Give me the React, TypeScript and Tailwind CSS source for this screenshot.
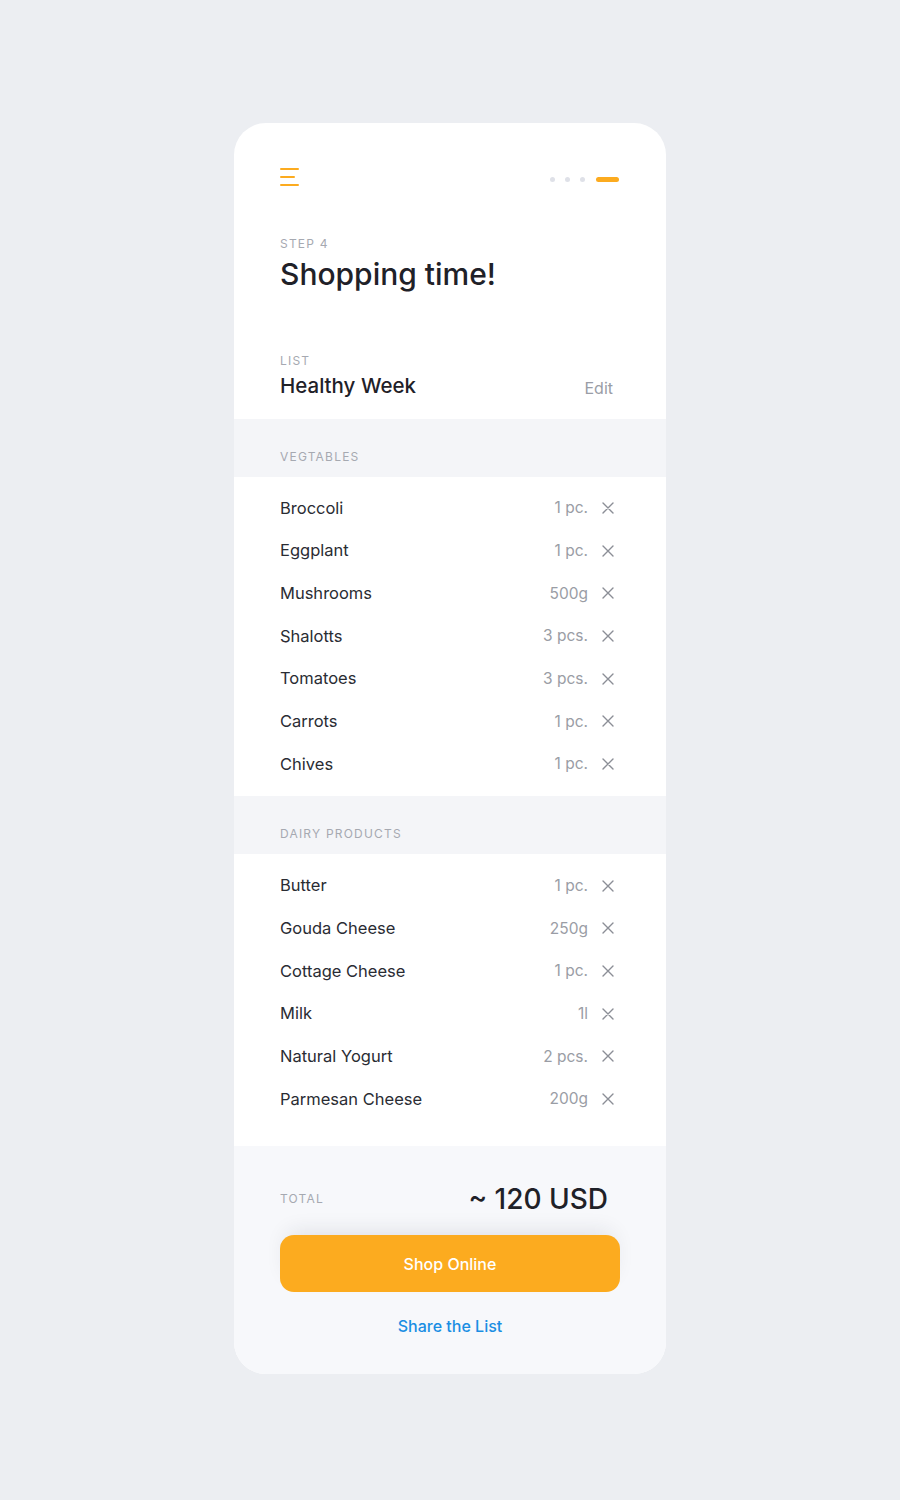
import React from "react";

type Item = { name: string; qty: string };

const sections: { title: string; items: Item[] }[] = [
  {
    title: "Vegtables",
    items: [
      { name: "Broccoli", qty: "1 pc." },
      { name: "Eggplant", qty: "1 pc." },
      { name: "Mushrooms", qty: "500g" },
      { name: "Shalotts", qty: "3 pcs." },
      { name: "Tomatoes", qty: "3 pcs." },
      { name: "Carrots", qty: "1 pc." },
      { name: "Chives", qty: "1 pc." },
    ],
  },
  {
    title: "Dairy Products",
    items: [
      { name: "Butter", qty: "1 pc." },
      { name: "Gouda Cheese", qty: "250g" },
      { name: "Cottage Cheese", qty: "1 pc." },
      { name: "Milk", qty: "1l" },
      { name: "Natural Yogurt", qty: "2 pcs." },
      { name: "Parmesan Cheese", qty: "200g" },
    ],
  },
];

function CloseIcon() {
  return (
    <svg width="12" height="12" viewBox="0 0 12 12" fill="none">
      <path d="M1 1L11 11M11 1L1 11" stroke="#8b8e96" strokeWidth="1.4" strokeLinecap="round" />
    </svg>
  );
}

function Row({ item }: { item: Item }) {
  return (
    <div className="flex h-[42.67px] items-center justify-between">
      <span className="text-[16.5px] text-[#2a2c33]">{item.name}</span>
      <div className="flex items-center gap-[14px]">
        <span className="text-[15.5px] text-[#9a9da5]">{item.qty}</span>
        <CloseIcon />
      </div>
    </div>
  );
}

export default function App() {
  return (
    <div
      className="min-h-[1500px] w-full bg-[#eceef2] pt-[123px]"
      style={{ fontFamily: "Inter, 'Noto Sans', sans-serif" }}
    >
      <div className="mx-auto w-[432px] overflow-hidden rounded-[32px] bg-white">
        {/* header */}
        <div className="px-[46px] pt-[45px]">
          <div className="flex items-center justify-between">
            <div className="flex flex-col gap-[6px]">
              <span className="block h-[2px] w-[19px] rounded bg-[#fcab1f]" />
              <span className="block h-[2px] w-[15px] rounded bg-[#fcab1f]" />
              <span className="block h-[2px] w-[19px] rounded bg-[#fcab1f]" />
            </div>
            <div className="mr-[1px] flex items-center gap-[10px] pt-[4px]">
              <span className="block h-[5px] w-[5px] rounded-full bg-[#dfe1e8]" />
              <span className="block h-[5px] w-[5px] rounded-full bg-[#dfe1e8]" />
              <span className="block h-[5px] w-[5px] rounded-full bg-[#dfe1e8]" />
              <span className="ml-[1px] block h-[5px] w-[23px] rounded-full bg-[#fcab1f]" />
            </div>
          </div>

          <div className="pt-[49px] text-[12px] uppercase tracking-[0.1em] text-[#a6a9b1]">Step 4</div>
          <h1 className="mt-[3px] text-[30px] leading-[36px] font-medium text-[#1f2128]">Shopping time!</h1>

          <div className="pt-[60px] text-[12px] uppercase tracking-[0.1em] text-[#a6a9b1]">List</div>
          <div className="mt-[1px] flex items-center justify-between pb-[17px]">
            <span className="text-[20.5px] font-medium text-[#1f2128]">Healthy Week</span>
            <span className="mr-[7px] pt-[4px] text-[16px] text-[#9a9da6]">Edit</span>
          </div>
        </div>

        {/* sections */}
        {sections.map((section, i) => (
          <div key={i}>
            <div className="flex h-[58px] items-end bg-[#f4f5f8] px-[46px] pb-[11px]">
              <span className="text-[12px] uppercase tracking-[0.1em] text-[#a6a9b1]">{section.title}</span>
            </div>
            <div className={`pl-[46px] pr-[52px] pt-[10px] ${i === sections.length - 1 ? "pb-[26px]" : "pb-[11px]"}`}>
              {section.items.map((item, j) => (
                <Row key={j} item={item} />
              ))}
            </div>
          </div>
        ))}

        {/* footer */}
        <div className="bg-[#f7f8fb] px-[46px] pt-[32px] pb-[36px]">
          <div className="flex items-center justify-between pr-[12px]">
            <span className="text-[12px] uppercase tracking-[0.1em] text-[#a6a9b1]">Total</span>
            <span className="text-[28px] font-medium text-[#1f2128]">~ 120 USD</span>
          </div>
          <button className="mt-[15px] flex h-[57px] w-full items-center justify-center rounded-[14px] bg-[#fcab1f] text-[16px] font-medium text-white shadow-[0_-10px_22px_-8px_rgba(30,40,60,0.12)]">
            Shop Online
          </button>
          <div className="mt-[22px] text-center text-[16px] font-medium text-[#1a8ee3]">Share the List</div>
        </div>
      </div>
    </div>
  );
}
